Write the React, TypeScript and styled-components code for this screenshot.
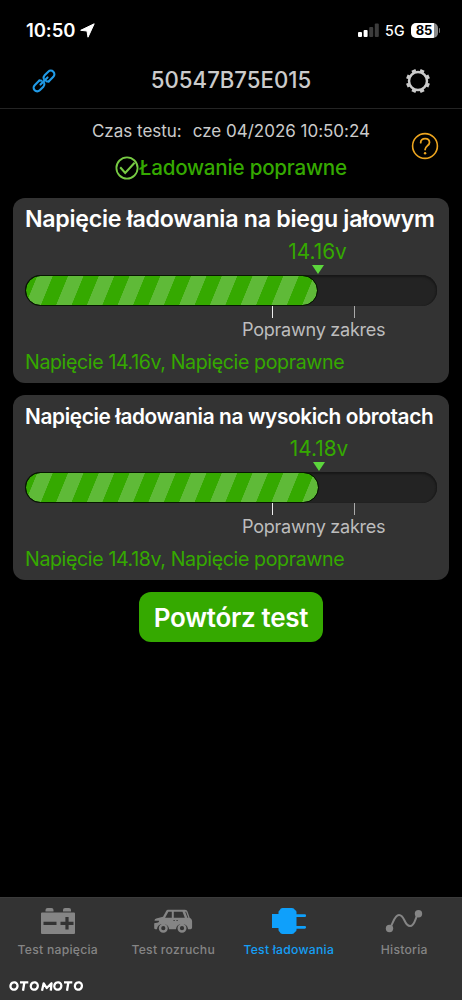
import React from "react";
import styled, { createGlobalStyle } from "styled-components";

const GlobalStyle = createGlobalStyle`
  * { box-sizing: border-box; }
  body { margin: 0; background: #000; font-family: Inter, "Liberation Sans", sans-serif; }
`;

const Screen = styled.div`
  width: 462px;
  height: 1000px;
  display: flex;
  flex-direction: column;
  background: #000;
  overflow: hidden;
  white-space: nowrap;
`;

const StatusBar = styled.div`
  height: 60px;
  flex: none;
  display: flex;
  align-items: center;
  justify-content: space-between;
  padding: 0 22px 0 26px;
  color: #fff;
`;

const Clock = styled.div`
  display: flex;
  align-items: center;
  gap: 5px;
  font-size: 18.5px;
  font-weight: 600;
  letter-spacing: -0.1px;
`;

const StatusIcons = styled.div`
  display: flex;
  align-items: center;
  gap: 6px;
  font-size: 14.2px;
  font-weight: 500;
`;

const Battery = styled.div`
  display: flex;
  align-items: center;
  gap: 1px;
  &::after {
    content: "";
    width: 1.5px;
    height: 5px;
    border-radius: 0 2px 2px 0;
    background: #777;
  }
`;

const BatteryBody = styled.div`
  width: 27px;
  height: 15px;
  border-radius: 5px;
  background: linear-gradient(90deg, #fff 85%, #8b8b8b 85%);
  color: #000;
  font-size: 13px;
  font-weight: 700;
  line-height: 15px;
  text-align: center;
  letter-spacing: -0.2px;
`;

const Header = styled.header`
  height: 49px;
  flex: none;
  display: grid;
  grid-template-columns: 88px 1fr 88px;
  align-items: center;
  justify-items: center;
  padding-bottom: 6px;
  border-bottom: 1px solid #242424;
`;

const DeviceId = styled.h1`
  margin: 0;
  padding-bottom: 2px;
  font-size: 22.2px;
  font-weight: 500;
  line-height: 26px;
  color: #cbcbcb;
`;

const Summary = styled.section`
  height: 89px;
  flex: none;
  display: grid;
  grid-template-columns: 76px 1fr 76px;
  align-items: center;
  justify-items: center;
`;

const SummaryText = styled.div`
  grid-column: 2;
  height: 89px;
  display: flex;
  flex-direction: column;
  align-items: center;
  padding-top: 11px;
`;

const TestTime = styled.div`
  display: flex;
  gap: 11px;
  font-size: 17px;
  line-height: 23px;
  letter-spacing: -0.01px;
  color: #cbcbcb;
`;

const Verdict = styled.div`
  display: flex;
  align-items: center;
  margin-top: 12px;
  font-size: 20.6px;
  font-weight: 500;
  letter-spacing: -0.22px;
  line-height: 25px;
  color: #35a900;
`;

const HelpButton = styled.div`
  display: flex;
  padding: 0 0 15px 1px;
`;

const Cards = styled.main`
  display: flex;
  flex-direction: column;
  gap: 12px;
  padding: 0 13px;
`;

const Card = styled.section`
  height: 185px;
  padding: 7px 12px 0;
  border-radius: 12px;
  background: #333;
`;

const CardTitle = styled.h2<{ $size: number; $spacing: number }>`
  margin: 0;
  height: 28px;
  font-size: ${(p) => p.$size}px;
  letter-spacing: ${(p) => p.$spacing}px;
  font-weight: 600;
  line-height: 29px;
  color: #fff;
`;

const Marker = styled.div`
  width: 80px;
  height: 42px;
  display: flex;
  flex-direction: column;
  align-items: center;
  padding-top: 6px;
  font-size: 20.8px;
  line-height: 25px;
  color: #35a900;
`;

const Pointer = styled.div`
  margin-top: 1px;
  border: 6px solid transparent;
  border-top: 9px solid #5cd63c;
  border-bottom: 0;
`;

const Track = styled.div`
  width: 412px;
  height: 31px;
  border-radius: 16px;
  background: #232323;
  box-shadow: inset 0 2px 2px #181818, inset -1px 0 1px #1b1b1b;
`;

const Fill = styled.div`
  height: 31px;
  border: 1.5px solid #061800;
  border-radius: 16px;
  background:
    repeating-linear-gradient(
      112.3deg,
      #35a900 0 10.2px,
      #5fba38 10.7px 24.5px,
      #35a900 25px 28.45px
    ) padding-box,
    #061800;
`;

const Range = styled.div`
  width: 143px;
  margin-left: 217px;
  font-size: 18.1px;
  letter-spacing: -0.28px;
  color: #bdbdbd;
  line-height: 23px;
`;

const Ticks = styled.div`
  width: 83px;
  height: 12px;
  margin-left: 30px;
  border-left: 1.5px solid #eee;
  border-right: 1px solid #aaa;
`;

const Result = styled.p`
  margin: 8px 0 0;
  font-size: 19.6px;
  letter-spacing: -0.38px;
  line-height: 26px;
  color: #35a900;
`;

const RetestButton = styled.button`
  align-self: center;
  width: 184px;
  height: 50px;
  flex: none;
  margin-top: 12px;
  padding: 1px 0 0;
  border: 0;
  border-radius: 12px;
  background: #35a900;
  color: #fff;
  font: 600 26px/50px Inter, sans-serif;
  letter-spacing: -0.3px;
`;

const TabBar = styled.nav`
  height: 103px;
  flex: none;
  margin-top: auto;
  display: flex;
  flex-direction: column;
  justify-content: space-between;
  padding-bottom: 7px;
  background: #333;
  border-top: 1px solid #3b3b3b;
`;

const Tabs = styled.div`
  display: grid;
  grid-template-columns: repeat(4, 1fr);
`;

const Tab = styled.div<{ $active?: boolean }>`
  display: flex;
  flex-direction: column;
  align-items: center;
  padding-top: 9px;
  gap: 5px;
  font-size: 12.2px;
  font-weight: 500;
  letter-spacing: 0.25px;
  line-height: 19px;
  color: ${(p) => (p.$active ? "#159ff5" : "#858585")};
`;

const Brand = styled.svg`
  display: block;
  margin-left: 9px;
`;

const LinkIcon = () => (
  <svg width="26" height="26" viewBox="0 0 26 26" fill="none" stroke="#209be8" strokeWidth="2.1" strokeLinecap="round" strokeLinejoin="round">
    <g transform="rotate(-45 13 13)">
      <path d="M10 9.4H3.4A3.6 3.6 0 0 0 3.4 16.6H8.5A3.6 3.6 0 0 0 11.7 14.6" />
      <path d="M10 9.4A3.6 3.6 0 0 1 11.5 11" />
      <path d="M16 16.6H22.6A3.6 3.6 0 0 0 22.6 9.4H17.5A3.6 3.6 0 0 0 14.3 11.4" />
      <path d="M16 16.6A3.6 3.6 0 0 1 14.5 15M8 13H18" />
    </g>
  </svg>
);

const GearIcon = () => (
  <svg width="26" height="26" viewBox="0 0 26 26" fill="none" stroke="#cbcbcb">
    <circle cx="13" cy="13" r="9" strokeWidth="2.5" />
    {[22.5, 67.5, 112.5, 157.5, 202.5, 247.5, 292.5, 337.5].map((a) => (
      <path key={a} d="M10.9 2.3h4.2" strokeWidth="2.7" transform={`rotate(${a} 13 13)`} />
    ))}
  </svg>
);

const CheckIcon = () => (
  <svg width="24" height="24" viewBox="0 0 24 24" fill="none" stroke="#77cb43" strokeWidth="1.8">
    <circle cx="12" cy="12" r="10.6" />
    <path d="M5.2 11.2l5 5.7L19.6 6.8" strokeWidth="2.1" />
  </svg>
);

const HelpIcon = () => (
  <svg width="28" height="28" viewBox="0 0 28 28" fill="none" stroke="#eda51f" strokeWidth="1.6" strokeLinecap="round">
    <circle cx="14" cy="14" r="12.4" />
    <path d="M9.7 10.7c0-2.6 1.8-4.1 4.4-4.1s4.4 1.5 4.4 3.8c0 3.3-4.4 3.6-4.4 7.1" strokeWidth="1.8" />
    <circle cx="14.1" cy="21.2" r="1.2" fill="#eda51f" stroke="none" />
  </svg>
);

const BatteryIcon = () => (
  <svg width="36" height="28" viewBox="0 0 36 28">
    <path fill="#858585" d="M5.5 4.500V3q0-2 2-2h4q2 0 2 2v1.500zM23 4.500V3q0-2 2-2h4q2 0 2 2v1.500zM1 6.500q0-1 1-1h32q1 0 1 1v19.500q0 1-1 1H2q-1 0-1-1z" />
    <path stroke="#333" strokeWidth="3.200" d="M3.500 16.300h13M20.500 16.300h13M27 10v12.600" />
  </svg>
);

const CarIcon = () => (
  <svg width="40" height="28" viewBox="0 0 40 28">
    <path fill="#858585" d="M15 2.800h17q2 0 2.500 1.700l2.200 6.300 1.400 1q1 .9 1 2.700v5.700q0 2-1.600 2h-2.400a6.200 6.200 0 0 0-12.200 0h-6.800a6.200 6.200 0 0 0-12.200 0H2.500q-1.300 0-1.300-1.500v-4.500l4-.8q1-.6.8-1.600H1.500q0-2 1.700-2.400L10 9.800l3.300-6Q13.800 2.800 15 2.800z" />
    <path fill="#333" d="M15.400 4.800h3.400v6h-6.700zM20.800 4.800h8.700l2.300 6h-11zM32.200 4.800h.9l2.200 6h-.9z" />
    <path stroke="#333" strokeWidth="1.200" d="M20.500 13.500h1.200M23.500 13.500h1.200" />
    <circle cx="10.300" cy="21.200" r="3.300" fill="none" stroke="#858585" strokeWidth="2.400" />
    <circle cx="29" cy="21.200" r="3.300" fill="none" stroke="#858585" strokeWidth="2.400" />
  </svg>
);

const PlugIcon = () => (
  <svg width="36" height="28" viewBox="0 0 36 28" fill="#0fa0fb">
    <path d="M1 7h6.5V5q0-1 1.2-1.8Q9.5 1 11.5 1h9.5q2 0 3 2 1.5.6 1.5 2v18q0 1.4-1.5 2-1 2-3 2h-9.5q-2 0-2.8-2-1.200-.8-1.200-2v-2H1z" />
    <path d="M25 8.7h8.7M25 20.3h8.7" stroke="#0fa0fb" strokeWidth="2.8" strokeLinecap="round" />
  </svg>
);

const HistoryIcon = () => (
  <svg width="38" height="28" viewBox="0 0 38 28" fill="none" stroke="#858585" strokeWidth="2">
    <path d="M4.5 21.5C8 18 9 8 14 8c6 0 5 11 11 11 5 0 5-8 8-12" />
    <circle cx="4.5" cy="21.5" r="3.7" fill="#858585" stroke="none" />
    <circle cx="33.5" cy="6.8" r="3.7" fill="#858585" stroke="none" />
  </svg>
);

const OtomotoLogo = () => (
  <Brand width="76" height="14" viewBox="0 0 76 14" fill="none" stroke="#fff" strokeWidth="2.3" strokeLinejoin="round" role="img" aria-label="OTOMOTO">
    {[5, 25.3, 48.8, 69.4].map((x) => (
      <ellipse key={x} cx={x} cy="7" rx="3.5" ry="3.7" transform={`rotate(15 ${x} 7)`} />
    ))}
    <path d="M11 3.300h8.300M15.400 3.300L14 11.700M55 3.300h8.300M59.400 3.300L58 11.700M33 11.700l1.700-7.400 3 4.700L42.500 4.300l-.7 7.400" />
  </Brand>
);

interface ReadingProps {
  title: string;
  titleSize: number;
  titleSpacing: number;
  volts: string;
  fill: number;
}

const Reading = ({ title, titleSize, titleSpacing, volts, fill }: ReadingProps) => (
  <Card>
    <CardTitle $size={titleSize} $spacing={titleSpacing}>{title}</CardTitle>
    <Marker style={{ marginLeft: fill - 40 }}>
      {volts}
      <Pointer />
    </Marker>
    <Track>
      <Fill style={{ width: fill }} />
    </Track>
    <Range>
      <Ticks />
      Poprawny zakres
    </Range>
    <Result>Napięcie {volts}, Napięcie poprawne</Result>
  </Card>
);

export default function App() {
  return (
    <Screen>
      <GlobalStyle />
      <StatusBar>
        <Clock>
          10:50
          <svg width="15" height="15" viewBox="0 0 15 15" fill="#fff" stroke="#fff" strokeLinejoin="round">
            <path d="M0.7 7.3L14.2 0.8 8 14.2 7 8z" />
          </svg>
        </Clock>
        <StatusIcons>
          <svg width="21" height="14" viewBox="0 0 21 14" fill="#fff">
            <rect x="0" y="9" width="4" height="5" rx="1" />
            <rect x="5.6" y="7" width="4" height="7" rx="1" />
            <rect x="11.2" y="4" width="4" height="10" rx="1" fill="#3c3c3c" />
            <rect x="16.8" y="0.5" width="4" height="13.5" rx="1" fill="#3c3c3c" />
          </svg>
          5G
          <Battery>
            <BatteryBody>85</BatteryBody>
          </Battery>
        </StatusIcons>
      </StatusBar>
      <Header>
        <LinkIcon />
        <DeviceId>50547B75E015</DeviceId>
        <GearIcon />
      </Header>
      <Summary>
        <SummaryText>
          <TestTime>
            <span>Czas testu:</span>
            <span>cze 04/2026 10:50:24</span>
          </TestTime>
          <Verdict>
            <CheckIcon />
            Ładowanie poprawne
          </Verdict>
        </SummaryText>
        <HelpButton>
          <HelpIcon />
        </HelpButton>
      </Summary>
      <Cards>
        <Reading title="Napięcie ładowania na biegu jałowym" titleSize={23.2} titleSpacing={-0.28} volts="14.16v" fill={292.5} />
        <Reading title="Napięcie ładowania na wysokich obrotach" titleSize={20.8} titleSpacing={-0.36} volts="14.18v" fill={294} />
      </Cards>
      <RetestButton>Powtórz test</RetestButton>
      <TabBar>
        <Tabs>
          <Tab><BatteryIcon />Test napięcia</Tab>
          <Tab><CarIcon />Test rozruchu</Tab>
          <Tab $active><PlugIcon />Test ładowania</Tab>
          <Tab><HistoryIcon />Historia</Tab>
        </Tabs>
        <OtomotoLogo />
      </TabBar>
    </Screen>
  );
}
